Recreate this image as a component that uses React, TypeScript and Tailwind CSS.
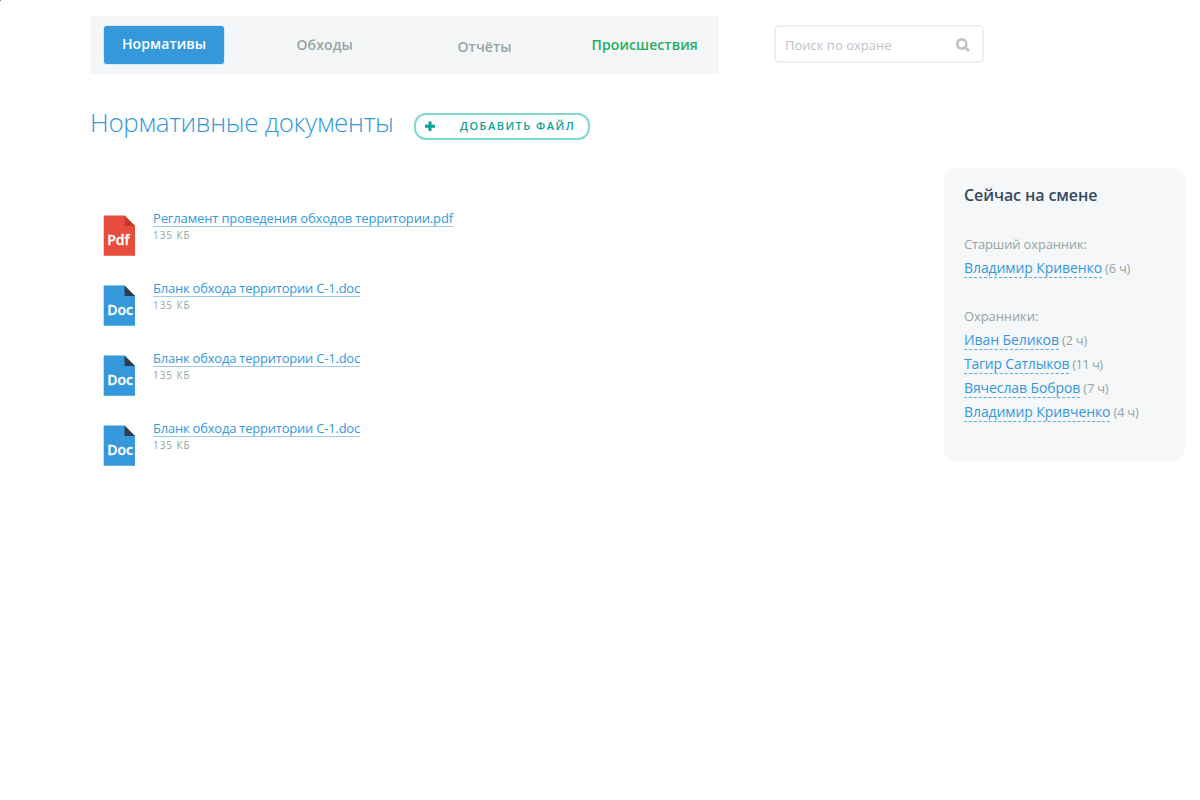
import React from "react";

type FileKind = "pdf" | "doc";

const files: { name: string; size: string; kind: FileKind }[] = [
  { name: "Регламент проведения обходов территории.pdf", size: "135 КБ", kind: "pdf" },
  { name: "Бланк обхода территории С-1.doc", size: "135 КБ", kind: "doc" },
  { name: "Бланк обхода территории С-1.doc", size: "135 КБ", kind: "doc" },
  { name: "Бланк обхода территории С-1.doc", size: "135 КБ", kind: "doc" },
];

const guards = [
  { name: "Иван Беликов", hours: 2 },
  { name: "Тагир Сатлыков", hours: 11 },
  { name: "Вячеслав Бобров", hours: 7 },
  { name: "Владимир Кривченко", hours: 4 },
];

function FileIcon({ kind }: { kind: FileKind }) {
  const pdf = kind === "pdf";
  return (
    <svg width="32" height="42" viewBox="0 0 32 42" className="block shrink-0">
      <path d="M0.7 0.4H21.5L32 11V40.8H0.7Z" fill={pdf ? "#e84c3d" : "#3598db"} />
      <path d="M21.5 0.4L32 11H21.5Z" fill={pdf ? "#c0392b" : "#2c3e50"} />
      <text
        x="4.2"
        y="29.5"
        fill="#ffffff"
        stroke="#ffffff"
        strokeWidth="0.3"
        className="font-['Open_Sans',sans-serif] text-[14px] font-semibold"
      >
        {pdf ? "Pdf" : "Doc"}
      </text>
    </svg>
  );
}

function Guard({ name, hours }: { name: string; hours: number }) {
  const wide = hours > 9;
  return (
    <li className="flex h-6 items-start whitespace-nowrap">
      <a
        className={`h-[18px] border-b border-dashed border-[#5dade2] text-[14px] leading-[16px] text-[#3598db] ${wide ? "tracking-[-0.22px]" : "tracking-[-0.09px]"}`}
      >
        {name}
      </a>
      <span
        className={`ml-[3px] text-[13px] leading-[17px] text-[#95a5a5] ${wide ? "tracking-[-0.6px]" : "tracking-[-0.26px]"}`}
      >
        ({hours} ч)
      </span>
    </li>
  );
}

export default function App() {
  return (
    <div className="relative h-[800px] w-[1200px] overflow-hidden bg-white pl-[90px] pt-4 font-['Open_Sans',sans-serif]">
      <span className="absolute left-0 top-0 h-px w-px bg-[#777777]" />
      <header className="flex items-start">
        <nav className="flex h-[58px] w-[629px] items-start rounded-[2px] bg-[#f4f6f8] pl-[14px] pt-[10px] text-[14px] font-semibold leading-[38px] tracking-[0.1px]">
          <a className="h-[38px] w-[120px] rounded-[3px] bg-[#3598db] pl-[18px] leading-[36px] text-white shadow-[0_0_0_0.5px_#b9dbf2]">
            Нормативы
          </a>
          <a className="ml-[72px] w-[161px] pl-[0.5px] text-[#95a5a5]">Обходы</a>
          <a className="w-[134px] pl-[0.5px] pt-[2px] text-[#95a5a5]">Отчёты</a>
          <a className="pl-[0.5px] text-[#27ae61]">Происшествия</a>
        </nav>
        <div className="ml-[55px] mt-[9px] flex h-[38px] w-[210px] items-center justify-between rounded-[5px] border-2 border-[#ecf0f1] pl-[9px] pr-3">
          <span className="mt-[2px] text-[13px] leading-[20px] text-[#bdc3c7]">Поиск по охране</span>
          <svg width="14" height="14" viewBox="0 0 14 14" className="mt-[2px] block">
            <circle cx="5.8" cy="6" r="4.6" fill="none" stroke="#bdc3c7" strokeWidth="2.6" />
            <path d="M9 9.2L12.9 13.1" stroke="#bdc3c7" strokeWidth="2.8" />
          </svg>
        </div>
      </header>

      <div className="mt-[29px] flex h-[40px] items-start">
        <h1 className="w-[324px] whitespace-nowrap text-[26px] font-light leading-[38px] tracking-[-0.3px] text-[#3598db]">
          Нормативные документы
        </h1>
        <button className="mt-[10px] flex h-[27px] w-[176px] items-start rounded-[12px] border-2 border-[#7fd7cd] bg-white pl-[9px] text-[#0aa296]">
          <svg width="10" height="10" viewBox="0 0 10 10" className="mt-[6px] block">
            <path d="M3.5 0.4H6.5V3.8H10V6.8H6.5V10H3.5V6.8H0V3.8H3.5Z" fill="#0aa296" />
          </svg>
          <span className="ml-[25px] whitespace-nowrap text-[11px] font-semibold leading-[21px] tracking-[1.48px]">
            ДОБАВИТЬ ФАЙЛ
          </span>
        </button>
      </div>

      <div className="mt-[25px] flex items-start">
        <main className="w-[854px] pl-[13px] pt-[42px]">
          <ul>
            {files.map((file, i) => (
              <li key={i} className="flex h-[70px] items-start">
                <div className="pt-[5px]">
                  <FileIcon kind={file.kind} />
                </div>
                <div className="ml-[18px] flex flex-col items-start">
                  <a
                    className={`h-[17px] whitespace-nowrap border-b border-[#9acbed] text-[13px] leading-[16px] text-[#3598db] ${file.kind === "pdf" ? "tracking-[-0.15px]" : "tracking-[-0.22px]"}`}
                  >
                    {file.name}
                  </a>
                  <span className="mt-px text-[10px] leading-[14px] tracking-[0.95px] text-[#95a5a5]">{file.size}</span>
                </div>
              </li>
            ))}
          </ul>
        </main>

        <aside className="h-[293px] w-[241px] rounded-[12px] bg-[#f5f7f9] pl-5 pt-[15px]">
          <h2 className="text-[16px] font-semibold leading-[24px] tracking-[-0.1px] text-[#34495e]">Сейчас на смене</h2>
          <p className="mt-[25px] h-6 text-[13px] leading-[24px] tracking-[-0.17px] text-[#95a5a5]">Старший охранник:</p>
          <ul className="mt-1">
            <Guard name="Владимир Кривенко" hours={6} />
          </ul>
          <p className="mt-5 h-6 text-[13px] leading-[24px] tracking-[-0.1px] text-[#95a5a5]">Охранники:</p>
          <ul className="mt-1">
            {guards.map((guard) => (
              <Guard key={guard.name} {...guard} />
            ))}
          </ul>
        </aside>
      </div>
    </div>
  );
}
